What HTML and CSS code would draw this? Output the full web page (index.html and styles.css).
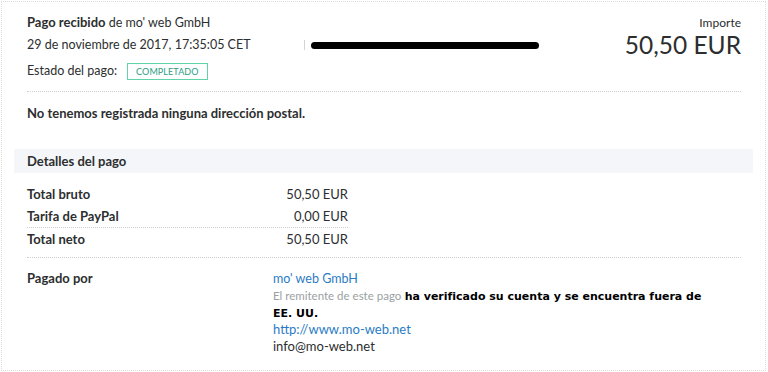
FILE: index.html
```html
<!DOCTYPE html>
<html lang="es">
<head>
<meta charset="utf-8">
<link rel="stylesheet" href="styles.css">
</head>
<body>
<div class="panel">
  <div class="content">
    <div class="top">
      <div class="top-left">
        <div class="line title"><b>Pago recibido</b> de mo' web GmbH</div>
        <div class="line date-row">
          <span class="date">29 de noviembre de 2017, 17:35:05 CET</span>
          <span class="redact"><span class="pipe"></span><span class="blob"></span></span>
        </div>
        <div class="line status">Estado del pago: <span class="badge">COMPLETADO</span></div>
      </div>
      <div class="top-right">
        <div class="label">Importe</div>
        <div class="amount">50,50 EUR</div>
      </div>
    </div>
    <div class="sep"></div>
    <p class="nopostal">No tenemos registrada ninguna dirección postal.</p>
  </div>
  <div class="band">Detalles del pago</div>
  <div class="content">
    <div class="totals">
      <div class="row"><span class="k">Total bruto</span><span class="v">50,50 EUR</span></div>
      <div class="row"><span class="k">Tarifa de PayPal</span><span class="v">0,00 EUR</span></div>
      <div class="row net"><span class="k">Total neto</span><span class="v">50,50 EUR</span></div>
    </div>
    <div class="sep"></div>
    <div class="payer">
      <div class="k">Pagado por</div>
      <div class="payer-info">
        <div class="blue name">mo' web GmbH</div>
        <div class="verify"><span class="muted">El remitente de este pago</span> <b class="vb">ha verificado su cuenta y se encuentra fuera de</b> <b class="vb">EE. UU.</b></div>
        <div class="blue">http://www.mo-web.net</div>
        <div>info@mo-web.net</div>
      </div>
    </div>
  </div>
</div>
</body>
</html>
```

FILE: styles.css
```css
html, body {
  margin: 0;
  padding: 0;
  background: #ffffff;
}
body {
  font-family: Lato, "Open Sans", sans-serif;
  font-size: 13px;
  color: #2c2e2f;
}
.panel {
  margin: 1px 0 0 1px;
  width: 765px;
  height: 370px;
  border: 1px dotted #dcdcdc;
  box-sizing: border-box;
  padding: 0 12px 0 12px;
  overflow: hidden;
}
.content {
  padding: 0 12px 0 13px;
}
.top {
  display: flex;
  justify-content: space-between;
  padding-top: 11px;
}
.line {
  height: 18px;
  line-height: 18px;
  font-size: 12.5px;
}
.title b { font-size: 13px; }
.title { margin-bottom: 5px; }
.date-row {
  display: flex;
  align-items: center;
  margin-bottom: 8px;
}
.date { width: 277px; }
.redact {
  display: flex;
  align-items: center;
}
.pipe {
  width: 1px;
  height: 10px;
  background: #d4d4d4;
  margin-right: 6px;
}
.blob {
  width: 228px;
  height: 7px;
  background: #000;
  border-radius: 4px;
}
.status {
  display: flex;
  align-items: center;
}
.badge {
  margin-left: 10px;
  border: 1px solid #5fd4a9;
  color: #2d9c84;
  font-size: 9px;
  letter-spacing: 0.1px;
  padding: 0 8px;
  height: 17px;
  line-height: 16px;
  box-sizing: border-box;
}
.top-right {
  text-align: right;
}
.label {
  font-size: 12px;
  line-height: 14px;
  margin-top: 3px;
}
.amount {
  font-size: 24.5px;
  line-height: 30px;
  color: #2c2e2f;
}
.sep {
  border-top: 1px dotted #cfcfcf;
}
.top + .sep { margin-top: 11px; }
.nopostal {
  margin: 0;
  padding: 12px 0 0;
  font-weight: bold;
  height: 45px;
  line-height: 18px;
}
.band {
  background: #f5f6f9;
  height: 24px;
  line-height: 24px;
  padding-left: 13px;
  font-weight: bold;
}
.totals {
  padding-top: 10px;
  width: 321px;
  padding-bottom: 7px;
}
.row {
  display: flex;
  justify-content: space-between;
  height: 22px;
  line-height: 22px;
}
.row .k, .payer .k { font-weight: bold; }
.row.net {
  border-top: 1px dotted #cfcfcf;
}
.payer {
  display: flex;
  padding-top: 12px;
  line-height: 17px;
}
.payer .k { width: 246px; }
.payer-info { width: 430px; }
.blue { color: #2a7bc4; }
.name { font-size: 12.5px; }
.muted { color: #9a9fa3; font-size: 11.5px; }
.vb {
  font-family: "DejaVu Sans", Verdana, sans-serif;
  font-size: 11px;
  line-height: 14px;
  color: #000;
}
```
